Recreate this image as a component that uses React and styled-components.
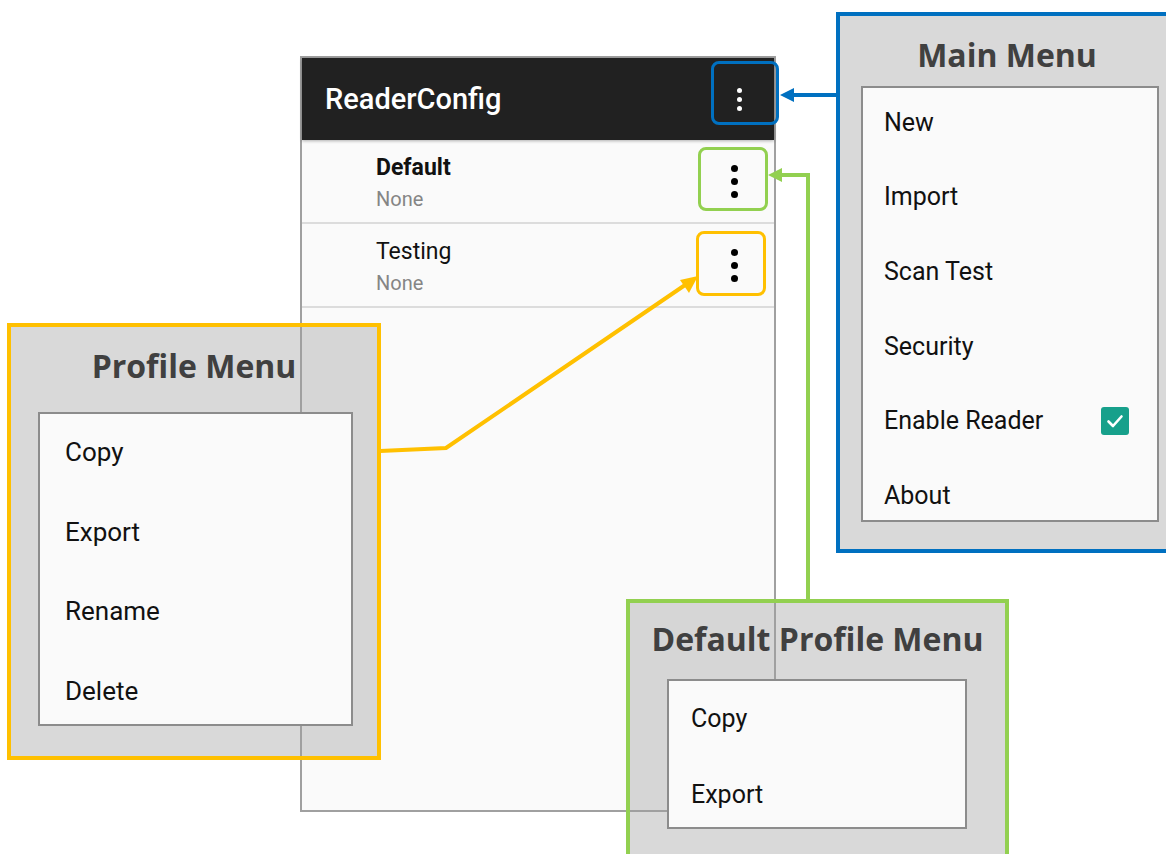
import React from 'react';
import styled, { createGlobalStyle } from 'styled-components';

const GlobalStyle = createGlobalStyle`
  html, body {
    margin: 0;
    padding: 0;
    background: #ffffff;
  }
  body {
    font-family: Roboto, "Liberation Sans", sans-serif;
  }
`;

const mainItems = ['New', 'Import', 'Scan Test', 'Security', 'Enable Reader', 'About'];
const profileItems = ['Copy', 'Export', 'Rename', 'Delete'];
const defaultItems = ['Copy', 'Export'];

const profiles = [
  { name: 'Default', bold: true },
  { name: 'Testing', bold: false },
];

function Kebab({ light }) {
  return (
    <Dots light={light}>
      <Dot light={light} />
      <Dot light={light} />
      <Dot light={light} />
    </Dots>
  );
}

function Callout({ left, top, width, height, color, title, titleTop, gap, panelLeft, panelWidth, panelHeight, rowHeight, rowShift, indent, size, items }) {
  return (
    <CalloutBox style={{ left, top, width, height }} color={color}>
      <CalloutTitle titleTop={titleTop} gap={gap}>{title}</CalloutTitle>
      <MenuPanel style={{ marginLeft: panelLeft, width: panelWidth, height: panelHeight }}>
        {items.map((item) => (
          <MenuItem key={item} rowHeight={rowHeight} rowShift={rowShift} indent={indent} size={size}>
            <span>{item}</span>
            {item === 'Enable Reader' && (
              <Check>
                <svg width="20" height="20" viewBox="0 0 20 20">
                  <path d="M3.5 10.5 L8 15 L16.5 5.5" fill="none" stroke="#fff" strokeWidth="2.6" strokeLinecap="round" strokeLinejoin="round" />
                </svg>
              </Check>
            )}
          </MenuItem>
        ))}
      </MenuPanel>
    </CalloutBox>
  );
}

export default function App() {
  return (
    <>
      <GlobalStyle />
      <Canvas>
        <Phone>
          <Toolbar>
            <AppTitle>ReaderConfig</AppTitle>
            <Kebab light />
          </Toolbar>
          {profiles.map((p) => (
            <ProfileRow key={p.name}>
              <ProfileText>
                <ProfileName bold={p.bold}>{p.name}</ProfileName>
                <ProfileSub>None</ProfileSub>
              </ProfileText>
              <Kebab />
            </ProfileRow>
          ))}
        </Phone>

        <Highlight color="#0070c0" style={{ left: 711, top: 61, width: 68, height: 64 }} />
        <Highlight color="#92d050" style={{ left: 698, top: 147, width: 70, height: 64 }} />
        <Highlight color="#ffc000" style={{ left: 696, top: 231, width: 70, height: 65 }} />

        <Callout
          left={836} top={12} width={342} height={541}
          color="#0070c0" title="Main Menu"
          titleTop={19} gap={11}
          panelLeft={21} panelWidth={298} panelHeight={436}
          rowHeight={74.6} rowShift={6} indent={21} size={25}
          items={mainItems}
        />
        <Callout
          left={7} top={323} width={374} height={437}
          color="#ffc000" title="Profile Menu"
          titleTop={19} gap={26}
          panelLeft={27} panelWidth={315} panelHeight={314}
          rowHeight={79.7} rowShift={4} indent={25} size={26}
          items={profileItems}
        />
        <Callout
          left={626} top={599} width={383} height={270}
          color="#92d050" title="Default Profile Menu"
          titleTop={16} gap={20}
          panelLeft={37} panelWidth={300} panelHeight={150}
          rowHeight={76} rowShift={2} indent={22} size={25}
          items={defaultItems}
        />

        <Arrows width="1166" height="854" viewBox="0 0 1166 854">
          <polyline points="838,95 792,95" fill="none" stroke="#0070c0" strokeWidth="4" />
          <polygon points="780,95 794,88 794,102" fill="#0070c0" />

          <polyline points="808,600 808,175 780,175" fill="none" stroke="#92d050" strokeWidth="4" strokeLinejoin="miter" />
          <polygon points="768,175 782,168 782,182" fill="#92d050" />

          <polyline points="380,451 446,448 688,283" fill="none" stroke="#ffc000" strokeWidth="4" strokeLinejoin="miter" />
          <polygon points="698,276 680,280 689,293" fill="#ffc000" />
        </Arrows>
      </Canvas>
    </>
  );
}

const Canvas = styled.div`
  position: relative;
  width: 1166px;
  height: 854px;
  overflow: hidden;
  background: #ffffff;
`;

const Phone = styled.div`
  position: absolute;
  left: 300px;
  top: 56px;
  width: 476px;
  height: 756px;
  box-sizing: border-box;
  border: 2px solid #a0a0a0;
  background: #fafafa;
  display: flex;
  flex-direction: column;
`;

const Toolbar = styled.div`
  height: 82px;
  background: #212121;
  display: flex;
  align-items: center;
  justify-content: space-between;
  padding: 0 30px 0 23px;
  box-shadow: 0 1px 3px rgba(0, 0, 0, 0.3);
`;

const AppTitle = styled.div`
  color: #ffffff;
  font-size: 29px;
  font-weight: 500;
  font-family: Roboto, "Liberation Sans", sans-serif;
`;

const Dots = styled.div`
  display: flex;
  flex-direction: column;
  align-items: center;
  gap: ${(p) => (p.light ? '4px' : '6px')};
  width: 10px;
`;

const Dot = styled.span`
  display: block;
  width: ${(p) => (p.light ? '5px' : '7px')};
  height: ${(p) => (p.light ? '5px' : '7px')};
  border-radius: 50%;
  background: ${(p) => (p.light ? '#ffffff' : '#000000')};
`;

const ProfileRow = styled.div`
  height: 84px;
  box-sizing: border-box;
  border-bottom: 2px solid #dcdcdc;
  display: flex;
  align-items: center;
  justify-content: space-between;
  padding: 0 35px 0 74px;
`;

const ProfileText = styled.div`
  display: flex;
  flex-direction: column;
  gap: 7px;
  padding-top: 4px;
`;

const ProfileName = styled.div`
  font-size: 23px;
  line-height: 24px;
  font-weight: ${(p) => (p.bold ? 700 : 400)};
  color: #111111;
`;

const ProfileSub = styled.div`
  font-size: 20px;
  line-height: 24px;
  color: #858585;
`;

const Highlight = styled.div`
  position: absolute;
  box-sizing: border-box;
  border: 3px solid ${(p) => p.color};
  border-radius: 8px;
`;

const CalloutBox = styled.div`
  position: absolute;
  box-sizing: border-box;
  border: 4px solid ${(p) => p.color};
  background: rgba(160, 160, 160, 0.4);
  display: flex;
  flex-direction: column;
`;

const CalloutTitle = styled.div`
  font-family: "Open Sans", "Liberation Sans", sans-serif;
  font-weight: 700;
  font-size: 32px;
  line-height: 40px;
  color: #404040;
  text-align: center;
  margin-top: ${(p) => p.titleTop}px;
  margin-bottom: ${(p) => p.gap}px;
  white-space: nowrap;
`;

const MenuPanel = styled.div`
  box-sizing: border-box;
  border: 2px solid #8c8c8c;
  background: #fafafa;
  overflow: hidden;
  display: flex;
  flex-direction: column;
`;

const MenuItem = styled.div`
  flex: 0 0 ${(p) => p.rowHeight}px;
  box-sizing: border-box;
  display: flex;
  align-items: center;
  justify-content: space-between;
  padding: 0 28px ${(p) => p.rowShift}px ${(p) => p.indent}px;
  font-size: ${(p) => p.size}px;
  color: #111111;
`;

const Check = styled.span`
  width: 28px;
  height: 28px;
  border-radius: 3px;
  background: #17a08b;
  display: flex;
  align-items: center;
  justify-content: center;
`;

const Arrows = styled.svg`
  position: absolute;
  left: 0;
  top: 0;
  pointer-events: none;
`;
